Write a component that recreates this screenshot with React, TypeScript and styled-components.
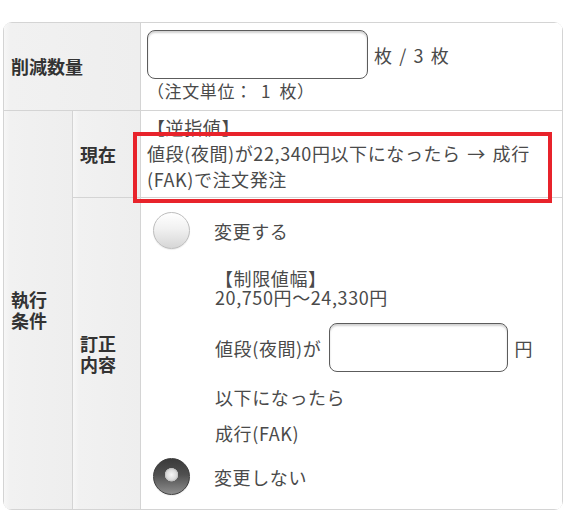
import styled, { createGlobalStyle } from 'styled-components';

const GlobalStyle = createGlobalStyle`
  html, body {
    margin: 0;
    padding: 0;
    background: #ffffff;
  }
  body {
    font-family: "Noto Sans CJK JP", "Noto Sans", sans-serif;
  }
`;

const Page = styled.div`
  padding: 22px 8px 6px 3px;
`;

const Sheet = styled.div`
  width: 560px;
  display: grid;
  grid-template-columns: 68px 67px 1fr;
  grid-template-rows: 87px 86px 311px;
  grid-template-areas:
    'qty qty qtyValue'
    'cond now nowValue'
    'cond fix fixValue';
  gap: 1px;
  padding: 1px;
  box-sizing: border-box;
  background: #d4d4d4;
  border-radius: 9px;
  overflow: hidden;
  color: #4a4a4a;
  font-size: 18px;
`;

const HeadCell = styled.div<{ $area: string }>`
  grid-area: ${({ $area }) => $area};
  display: flex;
  align-items: center;
  padding-left: 7px;
  background: linear-gradient(90deg, #f7f7f7 0, #f1f1f1 6px, #eeeeee 100%);
  color: #333;
  font-weight: 700;
  font-size: 18px;
  line-height: 21px;
`;

const ValueCell = styled.div<{ $area: string }>`
  grid-area: ${({ $area }) => $area};
  position: relative;
  background: #ffffff;
  padding: 0 8px 0 6px;
  letter-spacing: 0.6px;
  word-spacing: 2px;
`;

const QtyLine = styled.div`
  display: flex;
  align-items: center;
  margin-top: 7px;
`;

const TextInput = styled.input<{ $width: number; $gap?: number }>`
  width: ${({ $width }) => $width}px;
  height: 49px;
  box-sizing: border-box;
  margin: 0 0 0 ${({ $gap }) => $gap ?? 0}px;
  border: 1px solid #5c5c5c;
  border-radius: 8px;
  box-shadow: inset 0 2px 2px rgba(0, 0, 0, 0.18);
  background: #fff;
  font: inherit;
  padding: 0 10px;
  outline: none;
`;

const Unit = styled.span<{ $gap: number }>`
  margin-left: ${({ $gap }) => $gap}px;
  white-space: nowrap;
`;

const Note = styled.div`
  font-size: 17px;
  line-height: 20px;
  margin-top: 2px;
  word-spacing: 4px;
`;

const Current = styled.div`
  padding-top: 3px;
  line-height: 26px;
`;

const Marked = styled.div`
  position: relative;

  &::after {
    content: '';
    position: absolute;
    top: -8px;
    left: -14px;
    right: 2px;
    bottom: -11px;
    border: 4px solid #e8232b;
    pointer-events: none;
    z-index: 2;
  }
`;

const Choices = styled.div`
  display: flex;
  flex-direction: column;
  padding-top: 14px;
`;

const ChoiceRow = styled.label`
  display: flex;
  align-items: center;
  padding-left: 6px;
  gap: 24px;
  line-height: 20px;
`;

const Radio = styled.input.attrs({ type: 'radio' })`
  appearance: none;
  margin: 0;
  width: 37px;
  height: 37px;
  border-radius: 50%;
  box-sizing: border-box;
  flex: none;
  border: 1px solid #bdbdbd;
  background: linear-gradient(180deg, #ffffff 0%, #f1f1f1 45%, #d6d6d6 100%);
  box-shadow: 0 1px 1px rgba(0, 0, 0, 0.08);

  &:checked {
    border-color: #3c3c3c;
    background:
      radial-gradient(circle at 50% 45%, #f6f6f6 0, #dadada 5px, #bcbcbc 6.5px, transparent 7px),
      linear-gradient(180deg, #3a3a3a 0%, #505050 45%, #8e8e8e 100%);
  }
`;

const Detail = styled.div`
  padding-left: 68px;
  display: flex;
  flex-direction: column;
`;

const Range = styled.div`
  margin-top: 20px;
  line-height: 19px;
`;

const PriceLine = styled.div`
  display: flex;
  align-items: center;
  margin-top: 16px;
  line-height: 20px;
`;

const Plain = styled.div<{ $top: number }>`
  margin-top: ${({ $top }) => $top}px;
  line-height: 20px;
`;

const LastChoice = styled.div`
  margin-top: 15px;
`;

export default function App() {
  return (
    <Page>
      <GlobalStyle />
      <Sheet>
        <HeadCell $area='qty'>削減数量</HeadCell>
        <ValueCell $area='qtyValue'>
          <QtyLine>
            <TextInput $width={221} type='text' />
            <Unit $gap={6}>枚 / 3 枚</Unit>
          </QtyLine>
          <Note>（注文単位： 1 枚）</Note>
        </ValueCell>

        <HeadCell $area='cond'>
          執行
          <br />
          条件
        </HeadCell>
        <HeadCell $area='now'>現在</HeadCell>
        <ValueCell $area='nowValue'>
          <Current>
            <div>【逆指値】</div>
            <Marked>
              値段(夜間)が22,340円以下になったら → 成行
              <br />
              (FAK)で注文発注
            </Marked>
          </Current>
        </ValueCell>

        <HeadCell $area='fix'>
          訂正
          <br />
          内容
        </HeadCell>
        <ValueCell $area='fixValue'>
          <Choices>
            <ChoiceRow>
              <Radio name='change' />
              変更する
            </ChoiceRow>
            <Detail>
              <Range>
                【制限値幅】
                <br />
                20,750円〜24,330円
              </Range>
              <PriceLine>
                値段(夜間)が
                <TextInput $width={179} $gap={8} type='text' />
                <Unit $gap={6}>円</Unit>
              </PriceLine>
              <Plain $top={15}>以下になったら</Plain>
              <Plain $top={16}>成行(FAK)</Plain>
            </Detail>
            <LastChoice>
              <ChoiceRow>
                <Radio name='change' defaultChecked />
                変更しない
              </ChoiceRow>
            </LastChoice>
          </Choices>
        </ValueCell>
      </Sheet>
    </Page>
  );
}
